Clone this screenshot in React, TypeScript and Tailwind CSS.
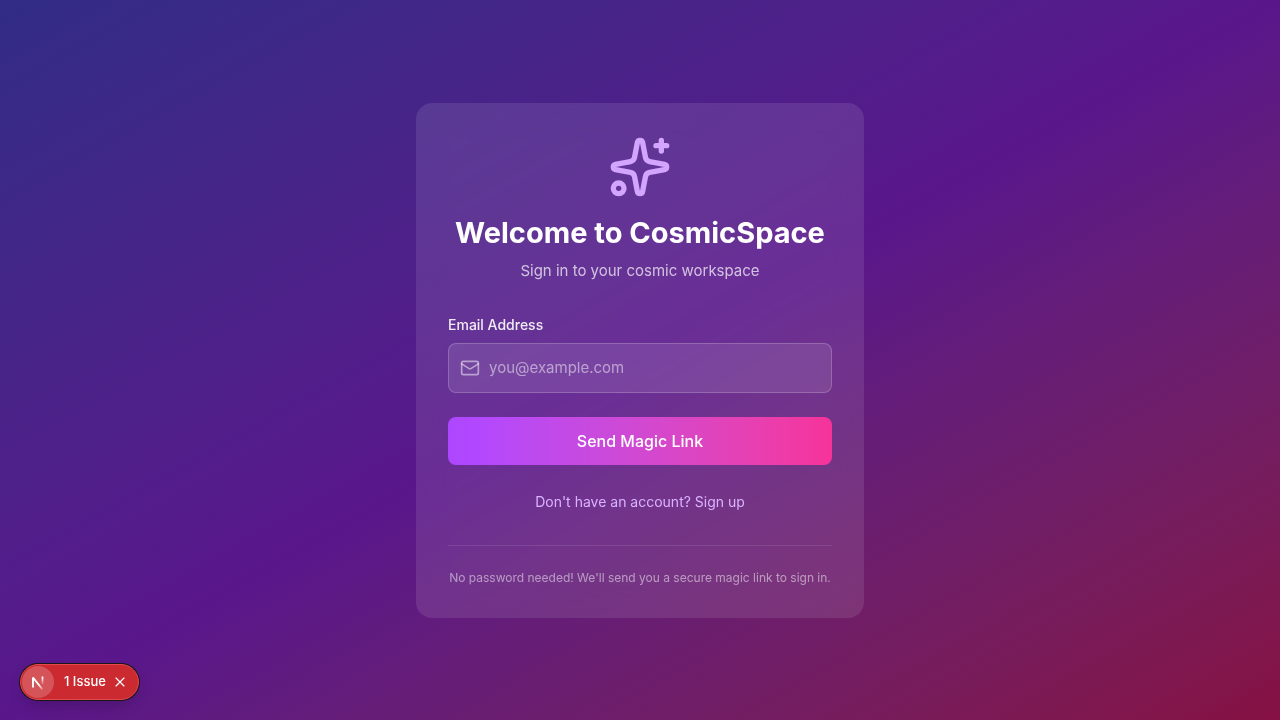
import { Mail, Sparkles, X } from "lucide-react";

export default function App() {
  return (
    <div className="flex min-h-screen items-center justify-center bg-gradient-to-br from-indigo-900 via-purple-900 to-pink-900 p-4 font-['Inter','Liberation_Sans',sans-serif]">
      <main className="w-full max-w-md rounded-2xl bg-white/10 p-8 backdrop-blur-lg">
        <header className="mb-8 text-center">
          <Sparkles className="mx-auto mb-4 size-16 text-[#d4a5ff]" aria-hidden="true" />
          <h1 className="mb-2 text-[29px] leading-9 font-bold text-white">Welcome to CosmicSpace</h1>
          <p className="text-[15px] leading-6 text-white/70">Sign in to your cosmic workspace</p>
        </header>
        <form className="space-y-6" onSubmit={(e) => e.preventDefault()}>
          <div>
            <label htmlFor="email" className="mb-2 block text-sm font-medium text-white/90">
              Email Address
            </label>
            <div className="relative">
              <Mail className="absolute top-1/2 left-3 size-5 -translate-y-1/2 text-white/50" aria-hidden="true" />
              <input
                id="email"
                type="email"
                placeholder="you@example.com"
                className="w-full rounded-lg border border-white/20 bg-white/10 py-3 pr-4 pl-10 text-[15px] leading-6 text-white placeholder:text-white/50"
              />
            </div>
          </div>
          <button type="submit" className="w-full rounded-lg bg-gradient-to-r from-purple-500 to-pink-500 px-4 py-3 font-medium text-white">
            Send Magic Link
          </button>
        </form>
        <div className="mt-6 text-center">
          <button type="button" className="text-sm text-purple-300">
            Don't have an account? Sign up
          </button>
        </div>
        <footer className="mt-8 border-t border-white/10 pt-6">
          <p className="text-center text-xs text-white/50">
            No password needed! We'll send you a secure magic link to sign in.
          </p>
        </footer>
      </main>
      <aside className="fixed bottom-5 left-5 flex h-9 items-center rounded-full border border-[#e5484d] bg-[#ca2a30] pr-1 pl-px text-white shadow-[0_0_0_1px_#171717,0_8px_16px_-4px_rgba(0,0,0,0.2)]">
        <button type="button" aria-label="Open developer tools" className="flex size-8 items-center justify-center rounded-full bg-white/20">
          <svg className="size-5" viewBox="0 0 20 20" fill="none" aria-hidden="true">
            <defs>
              <linearGradient id="diagonal" x1="11" y1="12.5" x2="16" y2="18.5" gradientUnits="userSpaceOnUse">
                <stop stopColor="white" />
                <stop offset="1" stopColor="white" stopOpacity="0" />
              </linearGradient>
              <linearGradient id="stem" x1="14" y1="6" x2="14" y2="13" gradientUnits="userSpaceOnUse">
                <stop stopColor="white" />
                <stop offset="1" stopColor="white" stopOpacity="0" />
              </linearGradient>
            </defs>
            <path d="M5 15.5V5.5L14.5 17.5" stroke="url(#diagonal)" strokeWidth="1.9" strokeLinejoin="bevel" />
            <path d="M14.5 4.5v8" stroke="url(#stem)" strokeWidth="1.7" />
          </svg>
        </button>
        <button type="button" className="pl-2.5 text-[13px] font-medium">1 Issue</button>
        <button type="button" aria-label="Dismiss" className="flex h-7 w-7 items-center justify-center">
          <X className="size-4" strokeWidth={1.75} />
        </button>
      </aside>
    </div>
  );
}
